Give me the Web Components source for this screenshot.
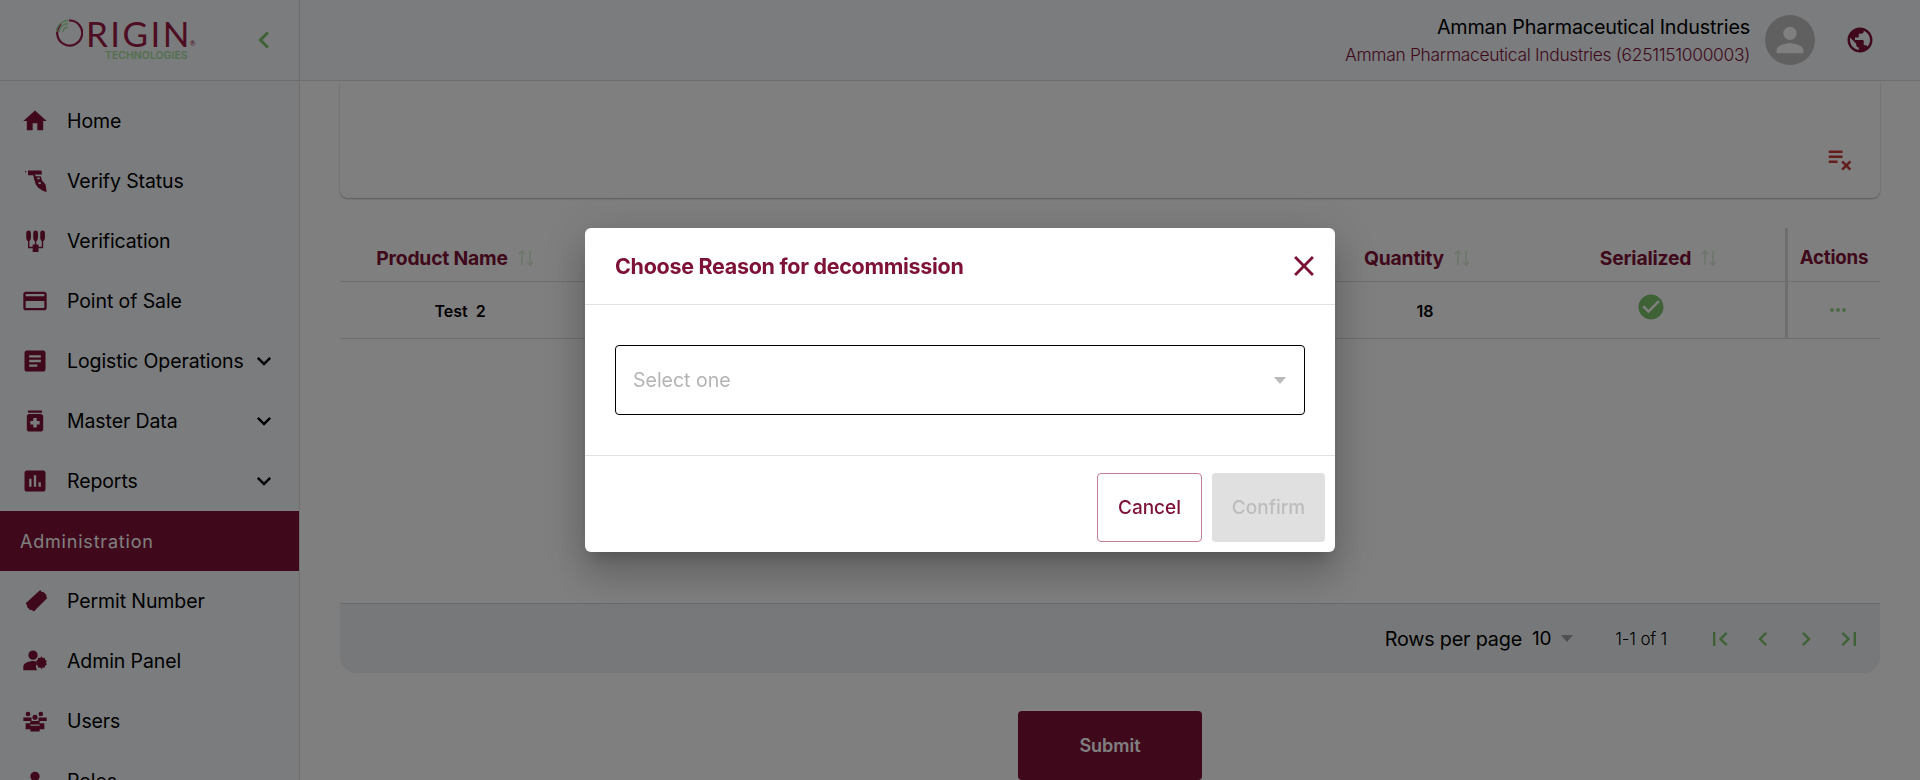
<!DOCTYPE html>
<html>
<head>
<meta charset="utf-8">
<title>Decommission</title>
<style>
  html, body { margin: 0; height: 100%; overflow: hidden; }
  body { font-family: "Inter", "Liberation Sans", sans-serif; background: #fff; color: #000; }
  .app { display: flex; height: 780px; overflow: hidden; }
  .main { flex: 1; min-width: 0; display: flex; flex-direction: column; }
</style>
</head>
<body>

<template id="nav-item-tpl">
  <style>
    :host { display: flex; align-items: center; height: 60px; flex: none; padding-left: 21px; box-sizing: border-box; font-size: 19.5px; letter-spacing: -0.1px; color: #000; }
    svg { width: 28px; height: 28px; fill: var(--brand); flex: none; margin-right: 18px; }
    .label { flex: 1; white-space: nowrap; }
    .arrow { fill: #000; margin: 0 21px 0 0; display: none; }
    :host([more]) .arrow { display: block; }
  </style>
  <svg viewBox="0 0 24 24"><path fill-rule="evenodd"></path></svg>
  <span class="label"><slot></slot></span>
  <svg class="arrow" viewBox="0 0 24 24"><path d="M7.41 8.59 12 13.17l4.59-4.58L18 10l-6 6-6-6z"></path></svg>
</template>

<template id="side-nav-tpl">
  <style>
    :host { display: flex; flex-direction: column; width: 300px; flex: none; height: 780px; box-sizing: border-box; background: #f5f8fc; border-right: 1px solid #ddd; overflow: hidden; }
    .top { height: 81px; flex: none; box-sizing: border-box; border-bottom: 1px solid #ddd; display: flex; align-items: center; padding-left: 55px; }
    .logo { width: 140px; color: #9b1a45; }
    .word { display: flex; align-items: center; height: 28px; font-family: "Lato", sans-serif; font-weight: 400; font-size: 35px; letter-spacing: 2.4px; line-height: 28px; }
    .word svg { width: 28px; height: 28px; flex: none; margin-right: 3px; }
    .word sup { font-size: 7px; line-height: 7px; letter-spacing: 0; align-self: flex-end; margin-left: -2px; }
    .tech { font-size: 10.5px; font-weight: 600; color: #a8e0a0; padding-left: 50px; line-height: 11px; margin-top: 3px; white-space: nowrap; }
    .back { width: 34px; height: 34px; fill: #7cc26c; margin-left: 52px; }
    .items { display: flex; flex-direction: column; padding-top: 10px; }
  </style>
  <div class="top">
    <div class="logo">
      <div class="word">
        <svg viewBox="0 0 28 28" fill="none">
          <path d="M6 5A12.500 12.500 0 1 0 14 1.500" stroke="#9b1a45" stroke-width="2.200"></path>
          <path d="M1.500 13A12 12 0 0 1 13 1.500M4.500 13A9 9 0 0 1 13 4.500M8 13A5.500 5.500 0 0 1 13 8" stroke="#a8e0a0" stroke-width="1.300"></path>
        </svg>
        <span>RIGIN</span><sup>®</sup>
      </div>
      <div class="tech">TECHNOLOGIES</div>
    </div>
    <svg class="back" viewBox="0 0 24 24"><path d="M15.410 7.410 14 6l-6 6 6 6 1.410-1.410L10.830 12z"></path></svg>
  </div>
  <div class="items"><slot></slot></div>
</template>

<template id="nav-heading-tpl">
  <style>
    :host { display: flex; align-items: center; height: 60px; flex: none; padding-left: 20px; background: var(--brand); color: #fff; font-size: 18px; letter-spacing: 0.8px; }
  </style>
  <slot></slot>
</template>

<template id="top-bar-tpl">
  <style>
    :host { display: flex; align-items: center; justify-content: flex-end; height: 81px; flex: none; box-sizing: border-box; background: #f5f8fc; border-bottom: 1px solid #ddd; }
    .who { text-align: right; margin-right: 15px; white-space: nowrap; padding-top: 2px; }
    .name { font-size: 19.8px; line-height: 28px; letter-spacing: -0.2px; }
    .org { font-size: 17.4px; line-height: 28px; color: var(--brand); font-weight: 300; letter-spacing: -0.3px; }
    .avatar { width: 50px; height: 50px; border-radius: 50%; background: #c0c0c0; display: flex; align-items: center; justify-content: center; }
    .avatar svg { width: 40px; height: 40px; fill: #fff; }
    .globe { width: 30px; height: 30px; fill: var(--brand); margin: 0 45px 0 30px; }
  </style>
  <div class="who">
    <div class="name"><slot name="name"></slot></div>
    <div class="org"><slot name="org"></slot></div>
  </div>
  <div class="avatar"><svg viewBox="0 0 24 24"><path d="M12 12c2.210 0 4-1.790 4-4s-1.790-4-4-4-4 1.790-4 4 1.790 4 4 4zm0 2c-2.670 0-8 1.340-8 4v2h16v-2c0-2.660-5.330-4-8-4z"></path></svg></div>
  <svg class="globe" viewBox="0 0 24 24"><path d="M12 2C6.480 2 2 6.480 2 12s4.480 10 10 10 10-4.480 10-10S17.520 2 12 2zm-1 17.930c-3.950-.49-7-3.850-7-7.930 0-.62.08-1.210.21-1.790L9 15v1c0 1.100.9 2 2 2v1.930zm6.900-2.540c-.26-.81-1-1.390-1.900-1.390h-1v-3c0-.55-.45-1-1-1H8v-2h2c.55 0 1-.45 1-1V7h2c1.100 0 2-.9 2-2v-.41c2.930 1.190 5 4.060 5 7.410 0 2.080-.8 3.970-2.100 5.390z"></path></svg>
</template>

<template id="filter-card-tpl">
  <style>
    :host { display: flex; align-items: flex-end; justify-content: flex-end; height: 117px; flex: none; margin: 0 40px; box-sizing: border-box; background: #fff; border-radius: 0 0 8px 8px; box-shadow: 0 1px 2px rgba(0,0,0,.3); padding: 0 25px 25px 0; }
    svg { width: 30px; height: 30px; fill: #c93a3a; }
  </style>
  <svg viewBox="0 0 24 24"><path d="M14 10H3v2h11v-2zm0-4H3v2h11V6zM3 16h7v-2H3v2zm11.410 6L17 19.410 19.590 22 21 20.590 18.410 18 21 15.410 19.590 14 17 16.590 14.410 14 13 15.410 15.590 18 13 20.590 14.410 22z"></path></svg>
</template>

<template id="data-table-tpl">
  <style>
    :host { display: grid; grid-template-columns: 230px 732px 230px 253px 95px; grid-template-rows: 54px 57px; flex: none; margin: 30px 40px 0; }
    .c { display: flex; align-items: center; justify-content: center; border-bottom: 1px solid #ddd; box-sizing: border-box; }
    .h { font-size: 19.3px; font-weight: 700; color: var(--brand); letter-spacing: -0.2px; padding-top: 6px; }
    .h svg { width: 16px; height: 18px; margin-left: 10px; fill: none; stroke: #8fd080; stroke-opacity: .35; stroke-width: 1.6; }
    .d { font-size: 16px; font-weight: 600; padding-top: 2px; }
    .p { padding-left: 10px; }
    .q { padding-left: 16px; }
    .act { border-left: 3px solid #ddd; }
    .aa { font-size: 18.7px; }
    .check { width: 30px; height: 30px; fill: #7cc26c; margin-top: -6px; margin-left: -16px; }
    .dots { display: flex; gap: 2px; margin-left: 8px; }
    .dots i { width: 4px; height: 4px; border-radius: 50%; background: #8fd080; opacity: .9; }
  </style>
  <div class="c h">Product Name<svg viewBox="0 0 16 18"><path d="M4 16V2M1 5l3-3 3 3M12 2v14M9 13l3 3 3-3"></path></svg></div>
  <div class="c"></div>
  <div class="c h">Quantity<svg viewBox="0 0 16 18"><path d="M4 16V2M1 5l3-3 3 3M12 2v14M9 13l3 3 3-3"></path></svg></div>
  <div class="c h">Serialized<svg viewBox="0 0 16 18"><path d="M4 16V2M1 5l3-3 3 3M12 2v14M9 13l3 3 3-3"></path></svg></div>
  <div class="c h act aa">Actions</div>
  <div class="c d p"><slot name="product"></slot></div>
  <div class="c"></div>
  <div class="c d q"><slot name="qty"></slot></div>
  <div class="c"><svg class="check" viewBox="0 0 24 24"><path d="M12 2C6.480 2 2 6.480 2 12s4.480 10 10 10 10-4.480 10-10S17.520 2 12 2zm-2 15-5-5 1.410-1.410L10 14.170l7.590-7.590L19 8l-9 9z"></path></svg></div>
  <div class="c act"><span class="dots"><i></i><i></i><i></i></span></div>
</template>

<template id="table-pager-tpl">
  <style>
    :host { display: flex; align-items: center; justify-content: flex-end; height: 70px; flex: none; margin: 264px 40px 0; box-sizing: border-box; background: #eef0f2; border-top: 1px solid #d4d4d4; border-radius: 0 0 16px 16px; font-size: 19.8px; letter-spacing: -0.2px; padding-right: 17px; }
    .size { font-size: 19px; margin-left: 10px; }
    .tri { width: 0; height: 0; border: 6px solid transparent; border-top: 7px solid #a0a0a0; border-bottom: 0; margin: 0 42px 0 10px; }
    .range { font-size: 17px; font-weight: 300; margin-right: 24px; }
    svg { width: 28px; height: 28px; fill: #7cc26c; margin-left: 15px; }
  </style>
  <span><slot></slot></span>
  <span class="size">10</span>
  <i class="tri"></i>
  <span class="range">1-1 of 1</span>
  <svg viewBox="0 0 24 24"><path d="M18.410 16.590 13.820 12l4.590-4.590L17 6l-6 6 6 6zM6 6h2v12H6z"></path></svg>
  <svg viewBox="0 0 24 24"><path d="M15.410 7.410 14 6l-6 6 6 6 1.410-1.410L10.830 12z"></path></svg>
  <svg viewBox="0 0 24 24"><path d="M10 6 8.590 7.410 13.170 12l-4.580 4.590L10 18l6-6z"></path></svg>
  <svg viewBox="0 0 24 24"><path d="M5.590 7.410 10.180 12l-4.590 4.590L7 18l6-6-6-6zM16 6h2v12h-2z"></path></svg>
</template>

<template id="submit-bar-tpl">
  <style>
    :host { display: flex; justify-content: center; flex: none; margin-top: 38px; }
    div { width: 184px; height: 69px; display: flex; align-items: center; justify-content: center; background: var(--brand); color: #fff; border-radius: 4px; font-size: 18px; font-weight: 600; }
  </style>
  <div><slot></slot></div>
</template>

<template id="reason-dialog-tpl">
  <style>
    :host { position: fixed; inset: 0; z-index: 20; display: flex; align-items: flex-start; justify-content: center; padding-top: 228px; background: rgba(0,0,0,.5); }
    .box { width: 750px; height: 324px; background: #fff; border-radius: 6px; box-shadow: 0 11px 15px -7px rgba(0,0,0,.2), 0 24px 38px 3px rgba(0,0,0,.14), 0 9px 46px 8px rgba(0,0,0,.12); display: flex; flex-direction: column; }
    header { height: 77px; flex: none; box-sizing: border-box; border-bottom: 1px solid #e2e2e2; display: flex; align-items: center; justify-content: space-between; padding: 0 14px 0 30px; }
    h2 { margin: 0; font-size: 21.5px; font-weight: 700; letter-spacing: -0.3px; color: var(--brand); }
    header svg { width: 34px; height: 34px; fill: var(--brand); }
    .body { flex: 1; display: flex; align-items: center; padding: 0 30px; }
    .select { flex: 1; height: 70px; box-sizing: border-box; border: 1px solid #000; border-radius: 4px; display: flex; align-items: center; justify-content: space-between; padding: 0 18px 0 17px; color: #b4b4b4; font-size: 19.5px; }
    .select i { width: 0; height: 0; border: 6px solid transparent; border-top: 7px solid #bbb; border-bottom: 0; }
    footer { height: 97px; flex: none; box-sizing: border-box; border-top: 1px solid #e2e2e2; display: flex; justify-content: flex-end; align-items: flex-start; gap: 10px; padding: 17px 10px 0 0; }
    .btn { height: 69px; box-sizing: border-box; display: flex; align-items: center; justify-content: center; border-radius: 4px; font-size: 19px; font-weight: 500; }
    .cancel { width: 105px; border: 1px solid #c77d95; color: var(--brand); }
    .confirm { width: 113px; background: #e0e0e0; color: #bdbdbd; }
  </style>
  <div class="box">
    <header>
      <h2><slot name="title"></slot></h2>
      <svg viewBox="0 0 24 24"><path d="M19 6.410 17.590 5 12 10.590 6.410 5 5 6.410 10.590 12 5 17.590 6.410 19 12 13.410 17.590 19 19 17.590 13.410 12z"></path></svg>
    </header>
    <div class="body">
      <div class="select"><slot name="placeholder"></slot><i></i></div>
    </div>
    <footer>
      <div class="btn cancel">Cancel</div>
      <div class="btn confirm">Confirm</div>
    </footer>
  </div>
</template>

<div class="app" style="--brand:#7e1136">
  <side-nav>
    <nav-item icon="home">Home</nav-item>
    <nav-item icon="scan">Verify Status</nav-item>
    <nav-item icon="verify">Verification</nav-item>
    <nav-item icon="card">Point of Sale</nav-item>
    <nav-item icon="doc" more>Logistic Operations</nav-item>
    <nav-item icon="med" more>Master Data</nav-item>
    <nav-item icon="chart" more>Reports</nav-item>
    <nav-heading>Administration</nav-heading>
    <nav-item icon="ticket">Permit Number</nav-item>
    <nav-item icon="admin">Admin Panel</nav-item>
    <nav-item icon="users">Users</nav-item>
    <nav-item icon="role">Roles</nav-item>
  </side-nav>
  <div class="main">
    <top-bar>
      <span slot="name">Amman Pharmaceutical Industries</span>
      <span slot="org">Amman Pharmaceutical Industries (6251151000003)</span>
    </top-bar>
    <filter-card></filter-card>
    <data-table>
      <span slot="product">Test&nbsp; 2</span>
      <span slot="qty">18</span>
    </data-table>
    <table-pager>Rows per page</table-pager>
    <submit-bar>Submit</submit-bar>
  </div>
</div>
<reason-dialog style="--brand:#7e1136">
  <span slot="title">Choose Reason for decommission</span>
  <span slot="placeholder">Select one</span>
</reason-dialog>

<script>
  const ICONS = {
    home: 'M10 20v-6h4v6h5v-8h3L12 3 2 12h3v8z',
    scan: 'M3.500 3.500h1v1h-1zM6 3h11.500l.5 3.500H12l.5 1.500h4.500l1 3.500 3 3.500 1 6.500-3-1-4.500-3-2-3-1.500-5-.5-2.500H6zM14 9v1.500h2V9zm1 4v1.500h2V13z',
    verify: 'M4.500 5a2 2 0 0 1 4 0v5l-1 2h-2l-1-2zM10.500 5a2 2 0 0 1 4 0v5l-1 2h-2l-1-2zM16.500 5a2 2 0 0 1 4 0v5l-1 2h-2l-1-2zM6 12h1.200v5H10v1.200H6zM17.800 12H19v6.200h-4V17h2.800zM11.900 12h1.200v3h-1.200zM10 15h5v6.500h-5z',
    card: 'M20 4H4c-1.110 0-1.990.89-1.990 2L2 18c0 1.110.89 2 2 2h16c1.110 0 2-.89 2-2V6c0-1.110-.89-2-2-2zm0 14H4v-6h16v6zm0-10H4V6h16v2z',
    doc: 'M19 3H5c-1.100 0-2 .9-2 2v14c0 1.100.9 2 2 2h14c1.100 0 2-.9 2-2V5c0-1.100-.9-2-2-2zm-5 14H7v-2h7v2zm3-4H7v-2h10v2zm0-4H7V7h10v2z',
    med: 'M6 3h12v2H6zm11 3H7c-1.100 0-2 .9-2 2v11c0 1.100.9 2 2 2h10c1.100 0 2-.9 2-2V8c0-1.100-.9-2-2-2zm-1 9h-2.500v2.500h-3V15H8v-3h2.500V9.500h3V12H16v3z',
    chart: 'M19 3H5c-1.100 0-2 .9-2 2v14c0 1.100.9 2 2 2h14c1.100 0 2-.9 2-2V5c0-1.100-.9-2-2-2zM9 17H7v-7h2v7zm4 0h-2V7h2v10zm4 0h-2v-4h2v4z',
    ticket: 'M16.500 2.500l1.500 2 1-.5 3 3-.5 1 1 1.500-11.500 11.500-2-1.500-1 .5-3-3 .5-1-1.500-2z',
    admin: 'M10.300 11a4 4 0 1 0 0-8 4 4 0 0 0 0 8zm1.700 1.300c-.6-.1-1.200-.2-1.700-.2C6.800 12.100 2 13.900 2 16.800V20h11.800c-1.200-2-1.500-5 .2-7.500zM17.500 8l1 1.500 1.800-.3.3 1.800 1.600.9-.8 1.600.8 1.600-1.600.9-.3 1.800-1.800-.3-1 1.500-1-1.500-1.800.3-.3-1.800-1.600-.9.8-1.600-.8-1.600 1.600-.9.3-1.800 1.800.3z',
    users: 'M6 8a2 2 0 1 0 0-4 2 2 0 0 0 0 4zm11 0a2 2 0 1 0 0-4 2 2 0 0 0 0 4zM2 9h7v3H2zm13 0h7v3h-7zm-3 2a2.200 2.200 0 1 0 0-4.400A2.200 2.200 0 0 0 12 11zM8 12h8v3H8zM4 14h4v5H4zm12 0h4v5h-4zM8 16h8v5H8z',
    role: 'M12 12a4 4 0 1 0 0-8 4 4 0 0 0 0 8zm0 2c-2.670 0-8 1.340-8 4v2h16v-2c0-2.660-5.330-4-8-4z'
  };

  // stamp a template into an open shadow root
  class TplElement extends HTMLElement {
    constructor(id) {
      super();
      this.attachShadow({ mode: 'open' }).appendChild(document.getElementById(id).content.cloneNode(true));
    }
  }

  class NavItem extends TplElement {
    constructor() { super('nav-item-tpl'); }
    connectedCallback() {
      this.shadowRoot.querySelector('svg path').setAttribute('d', ICONS[this.getAttribute('icon')] || '');
    }
  }
  customElements.define('nav-item', NavItem);
  customElements.define('side-nav', class extends TplElement { constructor() { super('side-nav-tpl'); } });
  customElements.define('nav-heading', class extends TplElement { constructor() { super('nav-heading-tpl'); } });
  customElements.define('top-bar', class extends TplElement { constructor() { super('top-bar-tpl'); } });
  customElements.define('filter-card', class extends TplElement { constructor() { super('filter-card-tpl'); } });
  customElements.define('data-table', class extends TplElement { constructor() { super('data-table-tpl'); } });
  customElements.define('table-pager', class extends TplElement { constructor() { super('table-pager-tpl'); } });
  customElements.define('submit-bar', class extends TplElement { constructor() { super('submit-bar-tpl'); } });
  customElements.define('reason-dialog', class extends TplElement { constructor() { super('reason-dialog-tpl'); } });
</script>
</body>
</html>
